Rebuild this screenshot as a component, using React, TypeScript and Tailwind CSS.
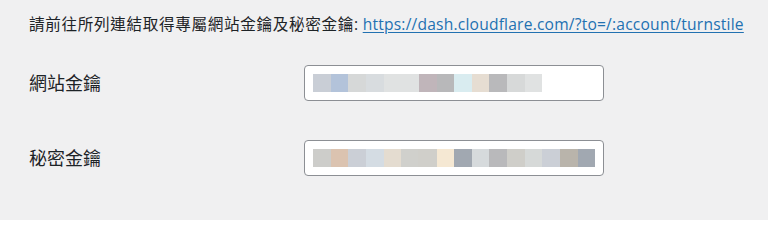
import React from 'react';

interface Tile {
  w: number;
  c: string;
}

// pixelated (redacted) key values, as shown in the screenshot
const siteKeyTiles: Tile[] = [
  { w: 18, c: '#c9ced6' },
  { w: 17, c: '#b3c3da' },
  { w: 18, c: '#d6d8d8' },
  { w: 18, c: '#d8dcdf' },
  { w: 18, c: '#e0e2e2' },
  { w: 17, c: '#e0e2e2' },
  { w: 18, c: '#c0b5ba' },
  { w: 17, c: '#b8b8ba' },
  { w: 18, c: '#d9ecf0' },
  { w: 17, c: '#e6ddd2' },
  { w: 18, c: '#b9b9bb' },
  { w: 18, c: '#d7d9d9' },
  { w: 17, c: '#e0e2e2' },
];

const secretKeyTiles: Tile[] = [
  { w: 18, c: '#cdcdca' },
  { w: 17, c: '#dbc3b0' },
  { w: 18, c: '#cbcfd6' },
  { w: 18, c: '#d4dce3' },
  { w: 17, c: '#e4dcd0' },
  { w: 17, c: '#d0d0cc' },
  { w: 19, c: '#d0cfca' },
  { w: 17, c: '#f5e8d3' },
  { w: 18, c: '#a1a8b1' },
  { w: 17, c: '#d6dadc' },
  { w: 18, c: '#b9b9bb' },
  { w: 18, c: '#cfcec9' },
  { w: 17, c: '#d6d9d8' },
  { w: 18, c: '#cbcfd6' },
  { w: 18, c: '#b9b4ab' },
  { w: 17, c: '#a1a8b1' },
];

const KeyField: React.FC<{ tiles: Tile[] }> = ({ tiles }) => (
  <div className="w-[300px] h-[36px] rounded-[4px] border border-[#8c8f94] bg-white flex items-center px-[8px]">
    <div className="flex h-[18px]">
      {tiles.map((t, i) => (
        <div key={i} className="h-full" style={{ width: t.w, backgroundColor: t.c }} />
      ))}
    </div>
  </div>
);

const Row: React.FC<{ label: string; tiles: Tile[] }> = ({ label, tiles }) => (
  <div className="flex items-center">
    <div className="w-[275px] text-[18px] text-[#1d2327]">{label}</div>
    <KeyField tiles={tiles} />
  </div>
);

export default function App() {
  return (
    <div
      className="w-[768px] h-[220px] bg-[#f0f0f1] pl-[29px] pt-[12px] text-[#1d2327]"
      style={{ fontFamily: '"Open Sans", "Noto Sans CJK TC", sans-serif' }}
    >
      <p className="text-[15.6px] leading-[24px] whitespace-nowrap">
        <span className="tracking-[0.65px]">請前往所列連結取得專屬網站金鑰及秘密金鑰:</span>{' '}
        <a href="#" className="text-[#2271b1] underline underline-offset-[2px] tracking-[0.2px]">
          https://dash.cloudflare.com/?to=/:account/turnstile
        </a>
      </p>
      <div className="flex flex-col gap-[39px] mt-[29px]">
        <Row label="網站金鑰" tiles={siteKeyTiles} />
        <Row label="秘密金鑰" tiles={secretKeyTiles} />
      </div>
    </div>
  );
}
